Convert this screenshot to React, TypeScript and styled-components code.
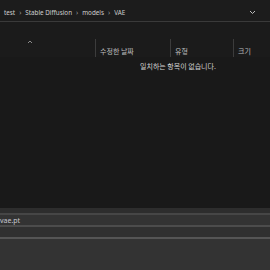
import React from "react";
import styled, { createGlobalStyle } from "styled-components";

const GlobalStyle = createGlobalStyle`
  html, body {
    margin: 0;
    padding: 0;
    background: #191919;
  }
  body {
    font-family: "Noto Sans", "Noto Sans CJK KR", sans-serif;
    color: #d0d0d0;
    overflow: hidden;
  }
`;

const Window = styled.div`
  width: 270px;
  height: 270px;
  display: flex;
  flex-direction: column;
  background: #191919;
  overflow: hidden;
`;

const AddressBar = styled.div`
  height: 22px;
  display: flex;
  align-items: center;
  padding: 3px 0 0 4px;
  box-sizing: border-box;
  background: #1c1c1c;
  border-bottom: 1px solid #3a3a3a;
  font-size: 6.3px;
  color: #cfcfcf;
`;

const Crumbs = styled.div`
  flex: 1;
  display: flex;
  align-items: center;
  gap: 4px;
  white-space: nowrap;
`;

const Sep = styled.span`
  font-size: 7px;
  color: #9a9a9a;
`;

const Drop = styled.div`
  width: 20px;
  display: flex;
  justify-content: center;
  margin-right: 8px;
`;

const Toolbar = styled.div`
  height: 17px;
  background: #1b1b1b;
`;

const HeaderRow = styled.div`
  height: 18px;
  display: grid;
  grid-template-columns: 95px 75px 63px 1fr;
  background: #1b1b1b;
  font-family: "Noto Sans CJK KR", sans-serif;
  font-size: 7px;
  color: #bdbdbd;
`;

const HeaderCell = styled.div<{ $divider?: boolean }>`
  position: relative;
  display: flex;
  align-items: center;
  padding-left: 4px;
  padding-top: 6px;
  border-left: ${(p) => (p.$divider ? "1px solid #3c3c3c" : "none")};
`;

const Caret = styled.span`
  position: absolute;
  left: 27px;
  top: -3px;
  font-size: 7px;
  color: #8a8a8a;
`;

const List = styled.div`
  flex: 1;
  display: flex;
  justify-content: flex-start;
  padding: 4px 0 0 140px;
  font-family: "Noto Sans CJK KR", sans-serif;
  font-size: 7px;
  color: #cfcfcf;
`;

const Footer = styled.div`
  height: 62px;
  display: flex;
  flex-direction: column;
  background: #2d2d2d;
  padding-top: 5px;
  box-sizing: border-box;
`;

const Line = styled.div<{ $c: string }>`
  height: 2px;
  background: ${(p) => p.$c};
`;

const FieldRow = styled.div<{ $bg: string }>`
  height: 10px;
  background: ${(p) => p.$bg};
  display: flex;
  align-items: center;
  font-size: 7px;
  color: #c8c8d0;
  padding-left: 0;
  white-space: nowrap;
`;

const Rest = styled.div`
  flex: 1;
  background: #333333;
`;

export default function App() {
  return (
    <Window>
      <GlobalStyle />
      <AddressBar>
        <Crumbs>
          <span>test</span>
          <Sep>›</Sep>
          <span>Stable Diffusion</span>
          <Sep>›</Sep>
          <span>models</span>
          <Sep>›</Sep>
          <span>VAE</span>
        </Crumbs>
        <Drop>
          <svg width="7" height="5" viewBox="0 0 7 5">
            <path d="M1 1 L3.5 3.5 L6 1" stroke="#bdbdbd" strokeWidth="1" fill="none" />
          </svg>
        </Drop>
      </AddressBar>
      <Toolbar />
      <HeaderRow>
        <HeaderCell>
          <Caret>
            <svg width="6" height="4" viewBox="0 0 6 4">
              <path d="M1 3 L3 1 L5 3" stroke="#8a8a8a" strokeWidth="1" fill="none" />
            </svg>
          </Caret>
        </HeaderCell>
        <HeaderCell $divider>수정한 날짜</HeaderCell>
        <HeaderCell $divider>유형</HeaderCell>
        <HeaderCell $divider>크기</HeaderCell>
      </HeaderRow>
      <List>일치하는 항목이 없습니다.</List>
      <Footer>
        <Line $c="#464646" />
        <FieldRow $bg="#333333">vae.pt</FieldRow>
        <Line $c="#4c4c4c" />
        <FieldRow $bg="#303030" />
        <Line $c="#555555" />
        <Rest />
      </Footer>
    </Window>
  );
}
